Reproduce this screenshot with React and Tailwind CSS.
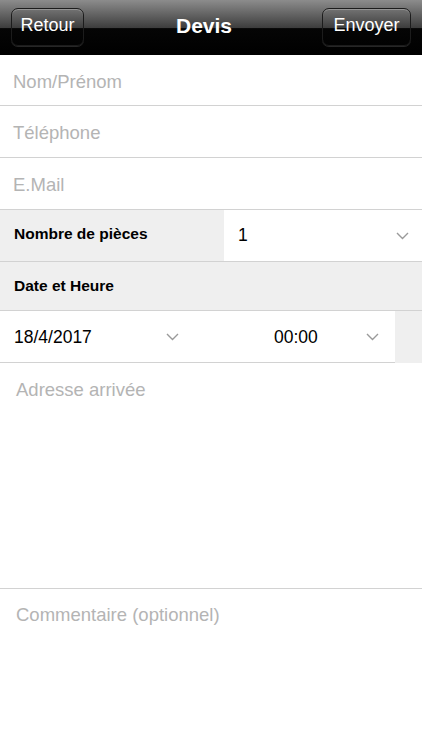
const font = { fontFamily: "'Liberation Sans', Arial, sans-serif" };

function Chevron() {
  return (
    <svg width="13" height="8" viewBox="0 0 13 8" className="shrink-0">
      <polyline points="1,1 6.5,6.5 12,1" fill="none" stroke="#9a9a9a" strokeWidth="1.4" />
    </svg>
  );
}

function NavButton({ children, className }) {
  return (
    <button
      className={`h-[38px] rounded-[7px] border border-[#1c1c1c] shadow-[inset_0_1px_0_rgba(255,255,255,0.25),0_1px_0_rgba(255,255,255,0.15)] text-white text-[18px] leading-none pb-[3px] ${className}`}
    >
      {children}
    </button>
  );
}

function TextRow({ label, h }) {
  return (
    <div className={`${h} flex items-center border-b border-[#d2d2d2] px-[13px] bg-white`}>
      <span className="text-[18.5px] text-[#b4b4b4] mt-[3px]">{label}</span>
    </div>
  );
}

export default function App() {
  return (
    <div className="w-[422px] h-[750px] bg-white overflow-hidden flex flex-col" style={font}>
      {/* nav bar */}
      <div className="h-[55px] shrink-0 flex items-center justify-between px-[11px] pb-[2px] bg-[linear-gradient(to_bottom,#8c8c8c_0%,#3e3e3e_50%,#050505_52%,#000_100%)]">
        <NavButton className="w-[73px]">Retour</NavButton>
        <span className="text-white text-[21px] font-bold leading-none pb-[2px] ml-[2px]">Devis</span>
        <NavButton className="w-[89px]">Envoyer</NavButton>
      </div>

      <TextRow label="Nom/Prénom" h="h-[51px]" />
      <TextRow label="Téléphone" h="h-[52px]" />
      <TextRow label="E.Mail" h="h-[52px]" />

      {/* nombre de pièces */}
      <div className="h-[52px] flex border-b border-[#d2d2d2]">
        <div className="w-[224px] bg-[#efefef] flex items-center px-[14px]">
          <span className="text-[15.5px] font-bold text-black -mt-1">Nombre de pièces</span>
        </div>
        <div className="flex-1 bg-white flex items-center justify-between pl-[14px] pr-[13px]">
          <span className="text-[17.5px] text-black">1</span>
          <Chevron />
        </div>
      </div>

      {/* date et heure */}
      <div className="h-[49px] bg-[#efefef] flex items-center px-[14px] border-b border-[#d2d2d2]">
        <span className="text-[15.5px] font-bold text-black">Date et Heure</span>
      </div>

      <div className="h-[52px] flex bg-[#efefef]">
        <div className="w-[395px] bg-white border-b border-[#d2d2d2] flex items-center">
          <div className="w-[200px] flex items-center justify-between pl-[14px] pr-[21px]">
            <span className="text-[17.5px] text-black mt-[2px]">18/4/2017</span>
            <Chevron />
          </div>
          <div className="flex-1 flex items-center justify-between pl-[74px] pr-[16px]">
            <span className="text-[17.5px] text-black mt-[2px]">00:00</span>
            <Chevron />
          </div>
        </div>
      </div>

      {/* adresse */}
      <div className="h-[226px] border-b border-[#d2d2d2] px-[16px] pt-[13px]">
        <span className="text-[18.5px] text-[#b4b4b4]">Adresse arrivée</span>
      </div>

      <div className="flex-1 px-[16px] pt-[12px]">
        <span className="text-[18.5px] text-[#b4b4b4]">Commentaire (optionnel)</span>
      </div>
    </div>
  );
}
